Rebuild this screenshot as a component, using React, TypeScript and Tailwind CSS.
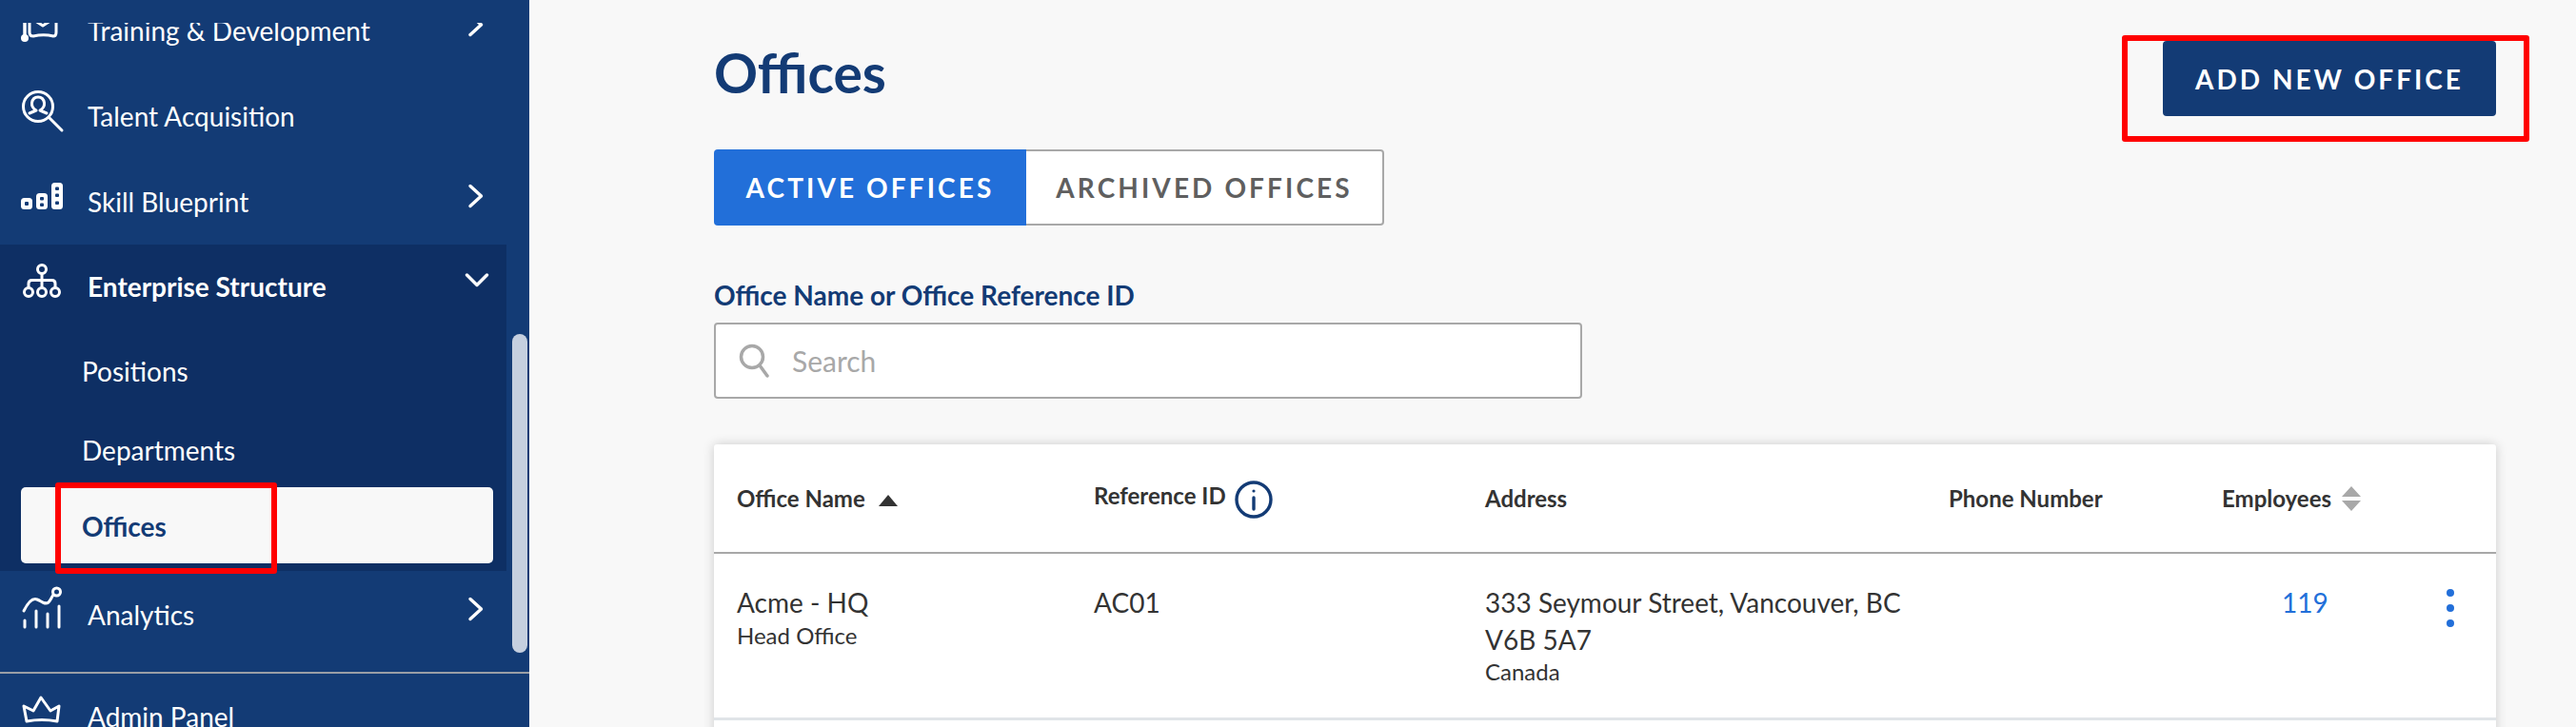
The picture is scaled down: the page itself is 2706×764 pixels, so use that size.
import React from 'react'

const Chevron = ({ down = false }: { down?: boolean }) => (
  <svg viewBox="0 0 24 24" className="w-[24px] h-[24px] overflow-visible" fill="none" stroke="white" strokeWidth={3.4} strokeLinecap="round" strokeLinejoin="round">
    {down ? <path d="M1.5 6 L12 16.5 L22.5 6" /> : <path d="M6 1.5 L17.5 12 L6 22.5" />}
  </svg>
)

const icons: Record<string, React.ReactNode> = {
  training: (
    <>
      <path d="M6 10 V30" strokeWidth={3.5} />
      <circle cx="6" cy="32" r="4" fill="white" stroke="none" />
      <path d="M11 8 V26 Q11 30 15 30 Q26 27.5 36 30 Q39 30 39 26 V8 M11 10 L25 19 L39 10" />
    </>
  ),
  talent: (
    <>
      <circle cx="20" cy="14" r="15.5" />
      <path d="M32 26 L45 39" />
      <path d="M11 21 L18 18 Q13 15 13.5 10 Q14.5 4 20 4 Q25.5 4 26.5 10 Q27 15 22 18 L29 21" />
    </>
  ),
  skill: (
    <g stroke="none">
      <rect x="2" y="20" width="12" height="12" rx="3.5" fill="white" />
      <rect x="6" y="24" width="4" height="4" rx="1" fill="#133b75" />
      <rect x="18" y="15" width="12" height="17" rx="3.5" fill="white" />
      <rect x="22" y="19" width="4" height="3.5" rx="1" fill="#133b75" />
      <rect x="22" y="25.5" width="4" height="3.5" rx="1" fill="#133b75" />
      <rect x="34" y="4" width="12" height="28" rx="3.5" fill="white" />
      <rect x="38" y="8.5" width="4" height="3.5" rx="1" fill="#133b75" />
      <rect x="38" y="15.5" width="4" height="3.5" rx="1" fill="#133b75" />
      <rect x="38" y="23.5" width="4" height="3.5" rx="1" fill="#133b75" />
    </g>
  ),
  structure: (
    <>
      <circle cx="24" cy="6" r="4.5" />
      <path d="M24 11 V25 M10 25 V21 Q10 17.5 13.5 17.5 H34.5 Q38 17.5 38 21 V25" />
      <circle cx="10" cy="30" r="4.5" />
      <circle cx="24" cy="30" r="4.5" />
      <circle cx="38" cy="30" r="4.5" />
    </>
  ),
  analytics: (
    <>
      <path d="M5 20 C9 12 14 6 19 8 C24 10 27 14 31 11 C33 9 34 6 36 3" />
      <circle cx="39.5" cy="0" r="4" />
      <path d="M6 30 V37 M18 20 V37 M30 23 V37 M42 15 V37" />
    </>
  ),
  admin: <path d="M5 13 L15 18 L23 4 L33 18 L42 13 L40 29 Q24 26 8 29 Z" />,
}

const NavIcon = ({ name }: { name: string }) => (
  <svg viewBox="0 0 48 48" className="w-[48px] h-[48px] shrink-0 overflow-visible ml-[20px]" fill="none" stroke="white" strokeWidth={3} strokeLinecap="round" strokeLinejoin="round">
    {icons[name]}
  </svg>
)

const NavRow = ({ icon, label, chevron, bold, open, height = 'h-[90px]' }: { icon: string; label: string; chevron?: boolean; bold?: boolean; open?: boolean; height?: string }) => (
  <div className={`flex items-center ${height} text-white text-[28px]`}>
    <NavIcon name={icon} />
    <span className={`ml-[24px] ${bold ? 'font-bold' : ''}`}>{label}</span>
    {chevron && (
      <span className={`ml-auto mb-[12px] ${open ? 'mr-[19px]' : 'mr-[44px]'}`}>
        <Chevron down={open} />
      </span>
    )}
  </div>
)

const Sidebar = () => (
  <aside className="relative w-[556px] shrink-0 h-full bg-[#133b75] overflow-hidden">
    <div className="mt-[24px] h-[682px] overflow-hidden">
      <div className="-mt-[37px]">
        <NavRow icon="training" label="Training & Development" chevron />
        <NavRow icon="talent" label="Talent Acquisition" />
        <NavRow icon="skill" label="Skill Blueprint" chevron />
        <div className="w-[532px] h-[343px] bg-[#0e2f64]">
          <NavRow icon="structure" label="Enterprise Structure" chevron bold open height="h-[88px]" />
          <div className="h-[90px] pl-[86px] flex items-center text-white text-[28px]">Positions</div>
          <div className="h-[76px] pl-[86px] flex items-center text-white text-[28px]">Departments</div>
          <div className="ml-[22px] w-[496px] h-[80px] mt-[1px] pl-[64px] pt-[2px] flex items-center rounded-[5px] bg-[#f8f8f8] text-[#133b75] font-bold text-[28px]">Offices</div>
        </div>
        <NavRow icon="analytics" label="Analytics" chevron height="h-[92px]" />
      </div>
    </div>
    <div className="border-t-[2px] border-[#9a9ea6]">
      <NavRow icon="admin" label="Admin Panel" />
    </div>
    {/* scrollbar thumb */}
    <div className="absolute left-[538px] top-[351px] w-[16px] h-[335px] rounded-full bg-[#c5cfdf]" />
    {/* red annotation */}
    <div className="absolute left-[58px] top-[507px] w-[233px] h-[96px] border-[6px] border-[#ff0000] rounded-[3px]" />
  </aside>
)

const Tabs = () => (
  <div className="mt-[35px] flex w-[704px] h-[80px] text-[28px] font-bold tracking-[3.1px]">
    <div className="w-[328px] flex items-center justify-center rounded-l-[4px] bg-[#226fd9] text-white">ACTIVE OFFICES</div>
    <div className="flex-1 flex items-center justify-center rounded-r-[4px] border-2 border-l-0 border-[#a8a8a8] bg-white text-[#5f5f5f]">ARCHIVED OFFICES</div>
  </div>
)

const SearchBox = () => (
  <div className="mt-[56px]">
    <label className="block text-[28px] leading-[34px] font-bold text-[#133b75]">Office Name or Office Reference ID</label>
    <div className="mt-[12px] w-[912px] h-[80px] flex items-center rounded-[4px] border-2 border-[#a8a8a8] bg-white">
      <svg viewBox="0 0 34 36" className="ml-[24px] w-[34px] h-[36px]" fill="none" stroke="#a8a8a8" strokeWidth={3.5} strokeLinecap="round">
        <circle cx="14" cy="14" r="11.5" />
        <path d="M22 23 L30 34" />
      </svg>
      <span className="ml-[22px] text-[30px] text-[#a8a8a8]">Search</span>
    </div>
  </div>
)

const InfoIcon = () => (
  <svg viewBox="0 0 40 40" className="ml-[9px] w-[40px] h-[40px] mt-[2px]" fill="none" stroke="#133b75" strokeWidth={3.4} strokeLinecap="round">
    <circle cx="20" cy="20" r="18" />
    <path d="M20 18 V30" />
    <circle cx="20" cy="11" r="1.6" fill="#133b75" stroke="none" />
  </svg>
)

const OfficesTable = () => (
  <div className="mt-[48px] w-[1872px] bg-white rounded-t-[3px] shadow-[0_0_12px_rgba(0,0,0,0.18)]">
    <div className="grid grid-cols-[399px_411px_487px_287px_288px] h-[115px] border-b-[2px] border-[#a8a8a8] text-[24px] font-bold text-[#333333] items-center">
      <div className="pl-[24px] flex items-center">
        Office Name
        <svg viewBox="0 0 20 12" className="ml-[14px] w-[20px] h-[12px] mt-[4px]"><path d="M10 0 L20 12 H0 Z" fill="#333333" /></svg>
      </div>
      <div className="flex items-center">
        <span className="-mt-[6px]">Reference ID</span>
        <InfoIcon />
      </div>
      <div>Address</div>
      <div>Phone Number</div>
      <div className="flex items-center">
        Employees
        <svg viewBox="0 0 20 26" className="ml-[11px] w-[20px] h-[26px]">
          <path d="M10 0 L20 11 H0 Z M0 15 H20 L10 26 Z" fill="#a8a8a8" />
        </svg>
      </div>
    </div>
    <div className="grid grid-cols-[399px_411px_487px_287px_288px] h-[175px] border-b-[3px] border-[#e0e4e8] text-[#333333] pt-[31px]">
      <div className="pl-[24px]">
        <div className="text-[28px] leading-[40px]">Acme - HQ</div>
        <div className="text-[24px] leading-[30px]">Head Office</div>
      </div>
      <div className="text-[28px] leading-[40px]">AC01</div>
      <div>
        <div className="text-[28px] leading-[40px]">333 Seymour Street, Vancouver, BC</div>
        <div className="text-[28px] leading-[38px]">V6B 5A7</div>
        <div className="text-[24px] leading-[30px]">Canada</div>
      </div>
      <div />
      <div className="flex items-start">
        <span className="ml-[63px] text-[28px] leading-[40px] text-[#226fd9]">119</span>
        <span className="ml-[124px] mt-[6px] flex flex-col gap-[8px]">
          <i className="block w-[8px] h-[8px] rounded-full bg-[#226fd9]" />
          <i className="block w-[8px] h-[8px] rounded-full bg-[#226fd9]" />
          <i className="block w-[8px] h-[8px] rounded-full bg-[#226fd9]" />
        </span>
      </div>
    </div>
    {/* next row continues below the fold */}
    <div className="h-[60px]" />
  </div>
)

export default function App() {
  return (
    <div className="relative flex w-[2706px] h-[764px] overflow-hidden bg-[#f8f8f8] font-['Lato',sans-serif]">
      <Sidebar />
      <main className="flex-1 pl-[194px] pr-[84px]">
        <div className="flex justify-between items-start pt-[43px] h-[122px]">
          <h1 className="text-[57px] leading-[66px] font-bold text-[#133b75]">Offices</h1>
          <button className="w-[350px] h-[79px] rounded-[4px] bg-[#133b75] text-white text-[28px] font-bold tracking-[3px]">ADD NEW OFFICE</button>
        </div>
        <Tabs />
        <SearchBox />
        <OfficesTable />
      </main>
      {/* red annotation */}
      <div className="absolute left-[2229px] top-[37px] w-[428px] h-[112px] border-[6px] border-[#ff0000] rounded-[3px]" />
    </div>
  )
}
